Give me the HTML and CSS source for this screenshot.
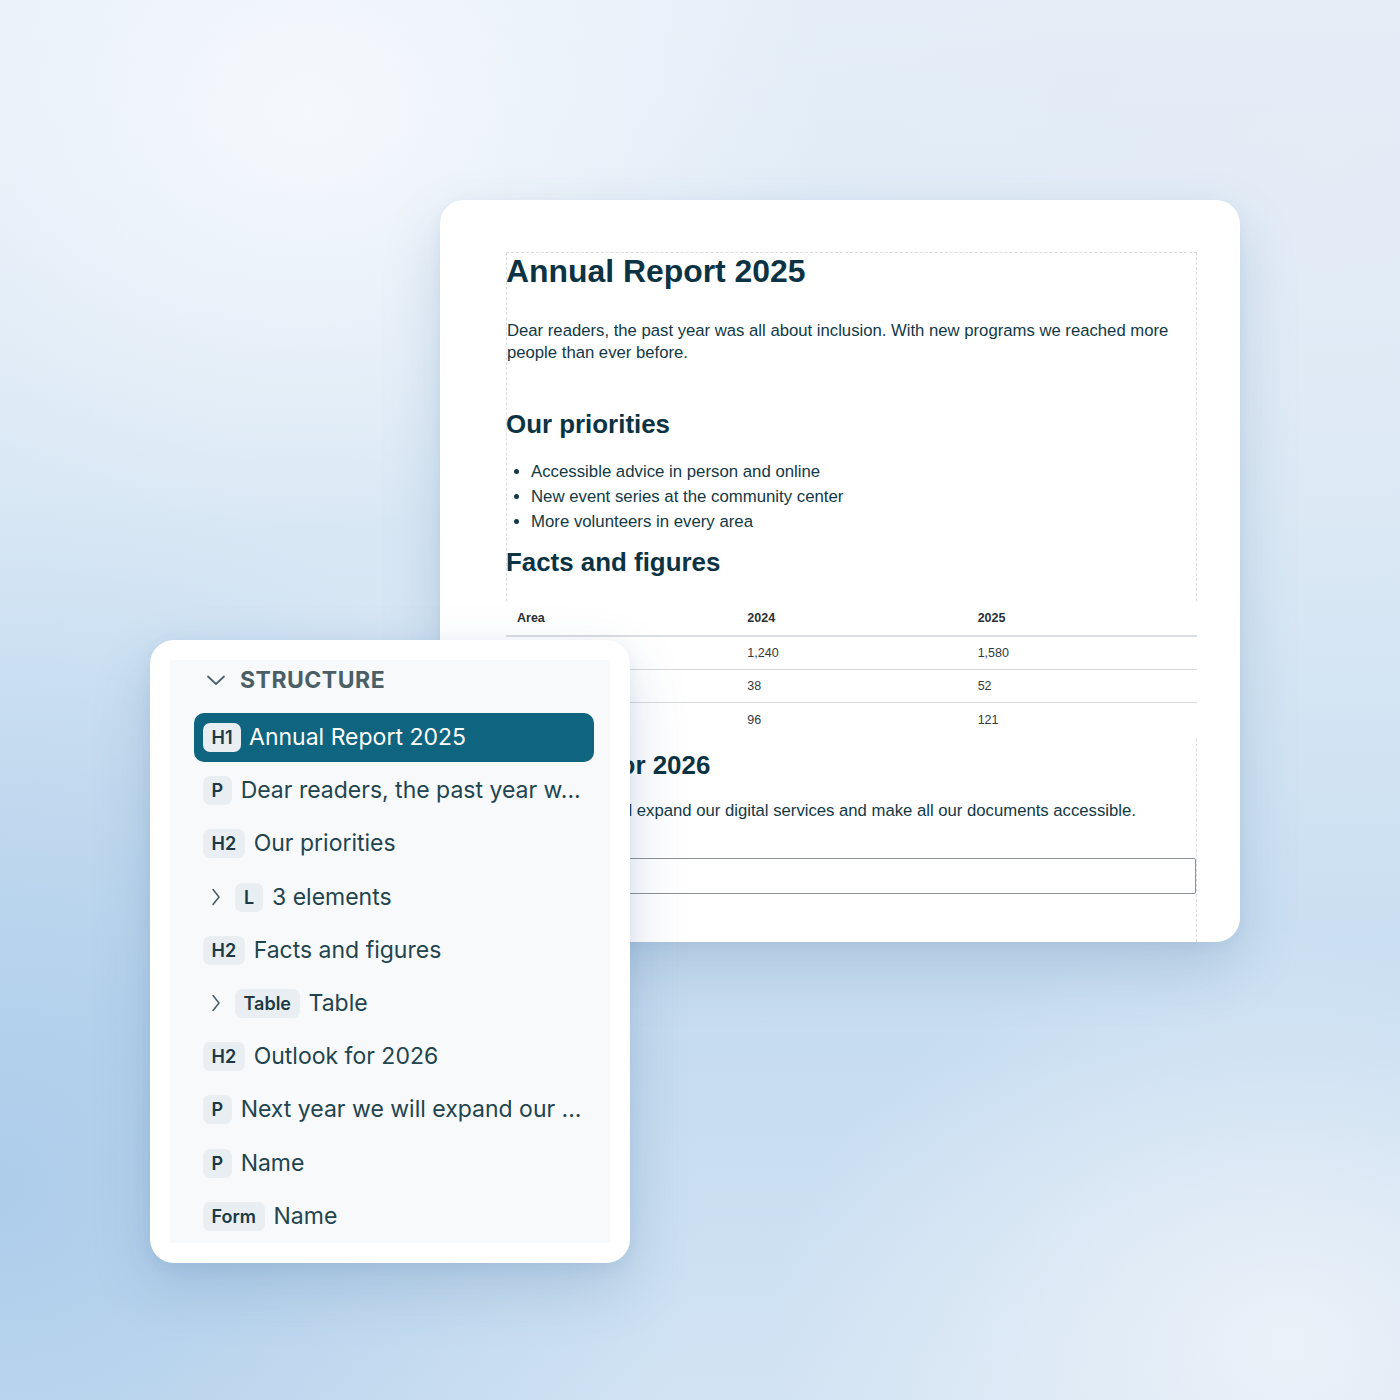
FILE: index.html
```html
<!DOCTYPE html>
<html lang="en">
<head>
<meta charset="utf-8">
<title>Annual Report 2025 – Structure</title>
<link rel="stylesheet" href="styles.css">
</head>
<body>
<div class="stage">
  <section class="doc-card">
    <div class="doc">
      <h1 class="doc-h1">Annual Report 2025</h1>
      <p class="doc-p intro">Dear readers, the past year was all about inclusion. With new programs we reached more people than ever before.</p>
      <h2 class="doc-h2 first">Our priorities</h2>
      <ul class="doc-list">
        <li>Accessible advice in person and online</li>
        <li>New event series at the community center</li>
        <li>More volunteers in every area</li>
      </ul>
      <h2 class="doc-h2">Facts and figures</h2>
      <div class="table-wrap">
        <table class="doc-table">
          <thead>
            <tr><th>Area</th><th>2024</th><th>2025</th></tr>
          </thead>
          <tbody>
            <tr><td>Consultations</td><td>1,240</td><td>1,580</td></tr>
            <tr><td>Events</td><td>38</td><td>52</td></tr>
            <tr><td>Volunteers</td><td>96</td><td>121</td></tr>
          </tbody>
        </table>
      </div>
      <h2 class="doc-h2 outlook">Outlook for 2026</h2>
      <p class="doc-p next">Next year we will expand our digital services and make all our documents accessible.</p>
      <div class="doc-field" aria-label="Name"></div>
    </div>
  </section>

  <aside class="structure">
    <div class="structure-inner">
      <div class="s-head">
        <svg class="s-chev" viewBox="0 0 24 24" width="24" height="24" aria-hidden="true"><path d="M4 8.5 L12 16 L20 8.5" fill="none" stroke="#4b6068" stroke-width="1.8" stroke-linecap="round" stroke-linejoin="round"/></svg>
        <span class="s-title">STRUCTURE</span>
      </div>
      <ul class="tree">
        <li class="node active"><span class="badge">H1</span><span class="label">Annual Report 2025</span></li>
        <li class="node"><span class="badge">P</span><span class="label">Dear readers, the past year w...</span></li>
        <li class="node"><span class="badge">H2</span><span class="label">Our priorities</span></li>
        <li class="node"><svg class="n-chev" viewBox="0 0 24 24" width="24" height="24" aria-hidden="true"><path d="M10 4.5 L16 12 L10 19.5" fill="none" stroke="#4b6068" stroke-width="1.6" stroke-linecap="round" stroke-linejoin="round"/></svg><span class="badge">L</span><span class="label">3 elements</span></li>
        <li class="node"><span class="badge">H2</span><span class="label">Facts and figures</span></li>
        <li class="node"><svg class="n-chev" viewBox="0 0 24 24" width="24" height="24" aria-hidden="true"><path d="M10 4.5 L16 12 L10 19.5" fill="none" stroke="#4b6068" stroke-width="1.6" stroke-linecap="round" stroke-linejoin="round"/></svg><span class="badge">Table</span><span class="label">Table</span></li>
        <li class="node"><span class="badge">H2</span><span class="label">Outlook for 2026</span></li>
        <li class="node"><span class="badge">P</span><span class="label">Next year we will expand our ...</span></li>
        <li class="node"><span class="badge">P</span><span class="label">Name</span></li>
        <li class="node"><span class="badge">Form</span><span class="label">Name</span></li>
      </ul>
    </div>
  </aside>
</div>
</body>
</html>
```

FILE: styles.css
```css
html, body {
  margin: 0;
  padding: 0;
}

body {
  width: 1400px;
  height: 1400px;
  overflow: hidden;
  font-family: "Liberation Sans", Arial, sans-serif;
  background:
    radial-gradient(ellipse 520px 420px at 22% 8%, rgba(246, 249, 253, 0.95), rgba(246, 249, 253, 0) 100%),
    radial-gradient(ellipse 700px 700px at 0% 85%, rgba(170, 203, 234, 0.9), rgba(170, 203, 234, 0) 100%),
    radial-gradient(ellipse 520px 420px at 92% 96%, rgba(236, 242, 249, 0.95), rgba(236, 242, 249, 0) 100%),
    radial-gradient(ellipse 600px 500px at 95% 10%, rgba(228, 236, 246, 0.9), rgba(228, 236, 246, 0) 100%),
    linear-gradient(180deg, #e5eef8 0%, #d6e6f4 45%, #c6dcf0 75%, #d2e3f3 100%);
}

.stage {
  position: relative;
  width: 1400px;
  height: 1400px;
}

/* ---------- Document card ---------- */

.doc-card {
  position: absolute;
  left: 440px;
  top: 200px;
  width: 800px;
  height: 742px;
  box-sizing: border-box;
  padding: 52px 43px 0 66px;
  background: #ffffff;
  border-radius: 24px;
  overflow: hidden;
  display: flex;
  flex-direction: column;
  box-shadow: 0 26px 60px rgba(40, 90, 140, 0.18), 0 4px 14px rgba(40, 90, 140, 0.06);
}

.doc {
  flex: 1;
  border: 1px dashed #d9dde1;
  border-bottom: none;
  color: #0d3442;
}

.doc-h1 {
  margin: 0 0 0 -1px;
  font-size: 31.9px;
  line-height: 36px;
  font-weight: 700;
  color: #0b3343;
}

.doc-p {
  margin: 0;
  font-size: 16.7px;
  line-height: 22px;
  color: #123946;
}

.intro {
  margin-top: 31px;
}

.doc-h2 {
  margin: 13px 0 0 -1px;
  font-size: 25.9px;
  line-height: 30px;
  font-weight: 700;
  color: #0b3343;
}

.doc-h2.first {
  margin-top: 45px;
}

.doc-list {
  margin: 20px 0 0;
  padding-left: 24px;
  font-size: 16.8px;
  line-height: 25px;
  color: #123946;
}

.table-wrap {
  position: relative;
  margin: 24px -1px 0;
  background: #ffffff;
}

.doc-table {
  width: 100%;
  border-collapse: collapse;
  table-layout: fixed;
  font-size: 12.5px;
  color: #333a3f;
}

.doc-table th {
  text-align: left;
  font-weight: 700;
  height: 34px;
  padding: 0 11px;
  border-bottom: 2px solid #dcdfe2;
  color: #2b3035;
}

.doc-table td {
  height: 32px;
  padding: 0 11px;
  border-bottom: 1px solid #d6d9dc;
}

.doc-table tr:last-child td {
  border-bottom: none;
  height: 34px;
}

.doc-h2.outlook {
  margin-top: 13px;
}

.next {
  margin-top: 20px;
}

.doc-field {
  margin-top: 36px;
  height: 34px;
  border: 1px solid #8c9297;
  border-radius: 2px;
}

/* ---------- Structure panel ---------- */

.structure {
  position: absolute;
  left: 150px;
  top: 640px;
  width: 480px;
  height: 623px;
  box-sizing: border-box;
  padding: 20px;
  background: #ffffff;
  border-radius: 24px;
  box-shadow: 0 24px 60px rgba(40, 90, 140, 0.18), 0 4px 16px rgba(40, 90, 140, 0.08);
  font-family: Inter, "Noto Sans", sans-serif;
}

.structure-inner {
  height: 100%;
  box-sizing: border-box;
  background: #f7f9fb;
  padding: 0 16px 0 24px;
}

.s-head {
  height: 40px;
  display: flex;
  align-items: center;
  gap: 12px;
  padding-left: 10px;
}

.s-chev {
  display: block;
  flex: none;
}

.s-title {
  font-size: 23px;
  font-weight: 700;
  letter-spacing: 0.5px;
  color: #4b5f67;
}

.tree {
  list-style: none;
  margin: 13px 0 0;
  padding: 0;
  display: flex;
  flex-direction: column;
  gap: 4.2px;
}

.node {
  height: 49px;
  display: flex;
  align-items: center;
  gap: 9px;
  padding-left: 9px;
  border-radius: 10px;
  color: #22444f;
  font-size: 23px;
  white-space: nowrap;
}

.node.active {
  background: #0f6480;
  color: #ffffff;
}

.node.active .badge {
  margin-right: -1px;
}

.n-chev {
  display: block;
  flex: none;
  margin-right: -1px;
}

.badge {
  flex: none;
  height: 29px;
  min-width: 28px;
  box-sizing: border-box;
  padding: 0 8.5px;
  display: inline-flex;
  align-items: center;
  justify-content: center;
  border-radius: 7px;
  background: #e8eef2;
  color: #1c3944;
  font-size: 18px;
  font-weight: 600;
}

.label {
  line-height: 1;
}
```
